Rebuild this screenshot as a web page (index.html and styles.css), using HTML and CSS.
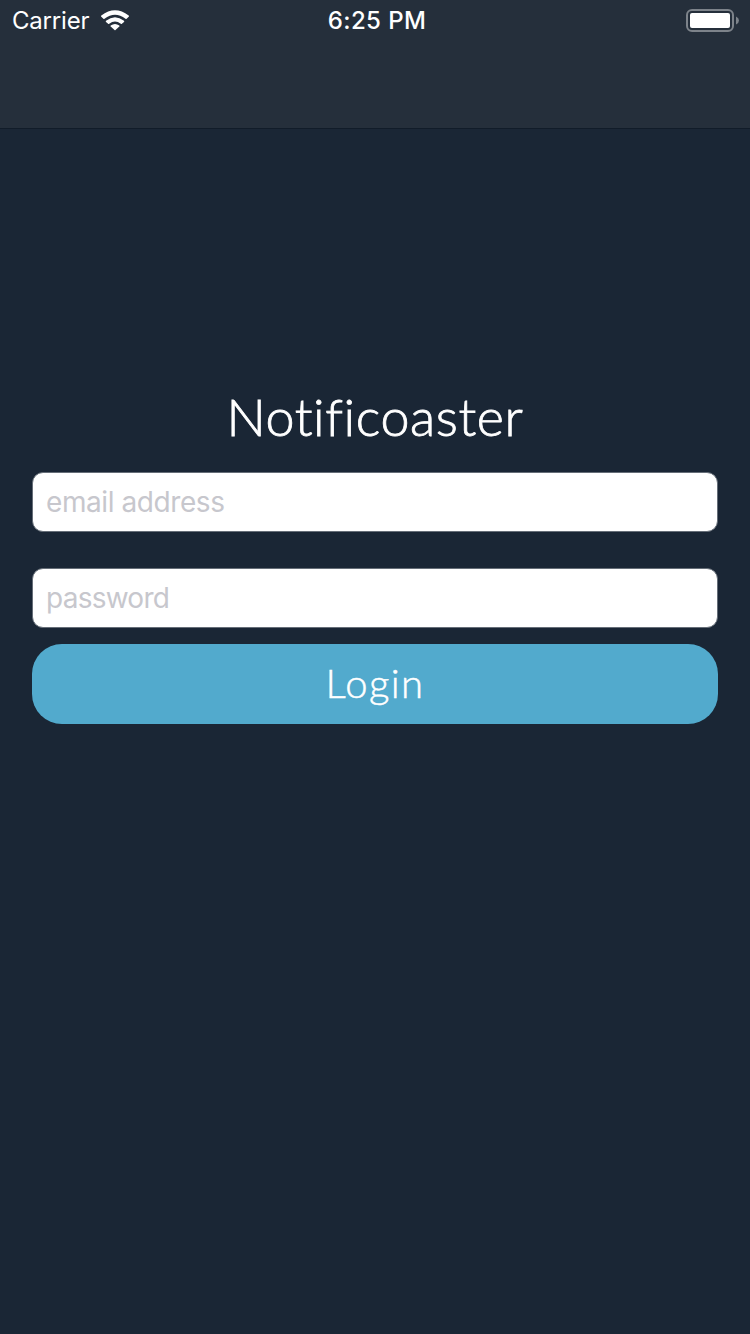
FILE: index.html
```html
<!DOCTYPE html>
<html lang="en">
<head>
<meta charset="utf-8">
<title>Notificoaster</title>
<link rel="stylesheet" href="styles.css">
</head>
<body>
<header class="nav">
  <div class="status">
    <div class="network">
      <span class="carrier">Carrier</span>
      <svg class="wifi" width="28" height="21" viewBox="0 0 28 21">
        <path d="M.3 5.6Q14-5.2 27.7 5.6Q28.3 6.1 27.7 6.7L25.6 8.8Q25.1 9.3 24.5 8.8Q14 .6 3.5 8.8Q2.9 9.3 2.4 8.8L.3 6.7Q-.3 6.1.3 5.6Z"/>
        <path d="M5 10.7Q14 3.6 23 10.7Q23.6 11.3 23 11.9L20.9 13.8Q20.4 14.3 19.8 13.8Q14 9.4 8.2 13.8Q7.6 14.3 7.1 13.8L5 11.9Q4.4 11.3 5 10.7Z"/>
        <path d="M9.7 15.6Q14 12.4 18.3 15.6Q18.8 16.1 18.3 16.6L14.5 20.1Q14 20.5 13.5 20.1L9.7 16.6Q9.2 16.1 9.7 15.6Z"/>
      </svg>
    </div>
    <span class="time">6:25 PM</span>
    <svg class="battery" width="54" height="24" viewBox="0 0 54 24">
      <rect x="1" y="1" width="46" height="21" rx="5" fill="none" stroke="#7d838a" stroke-width="2"/>
      <rect x="4" y="4" width="40" height="15" rx="2" fill="#fff"/>
      <path d="M50 7.5Q53 9 53 11.5T50 15.5Z" fill="#7d838a"/>
    </svg>
  </div>
</header>
<main class="login">
  <h1 class="title">Notificoaster</h1>
  <input class="field" type="email" placeholder="email address">
  <input class="field field-password" type="password" placeholder="password">
  <button class="submit" type="button">Login</button>
</main>
</body>
</html>
```
FILE: styles.css
```css
* { box-sizing: border-box; }

body {
  margin: 0;
  min-height: 1334px;
  background: #1a2635;
  color: #fff;
  font-family: Inter, "Liberation Sans", sans-serif;
}

.nav {
  height: 129px;
  background: #252f3b;
  border-bottom: 1px solid #111c29;
}

.status {
  display: grid;
  grid-template-columns: 1fr auto 1fr;
  align-items: center;
  height: 42px;
  padding: 0 10px 0 12px;
}

.network {
  display: flex;
  align-items: center;
  gap: 12px;
}

.carrier {
  width: 77px;
  font-size: 24px;
  line-height: 42px;
  letter-spacing: -0.2px;
}

.wifi {
  fill: #fff;
  margin-top: -2px;
}

.time {
  font-size: 24px;
  font-weight: 500;
  line-height: 42px;
  letter-spacing: 0.4px;
  padding-left: 2px;
}

.battery { justify-self: end; }

.login {
  display: flex;
  flex-direction: column;
  padding: 251px 32px 0;
}

.title {
  margin: 0 0 20px;
  font: 300 52px/72px Lato, sans-serif;
  letter-spacing: 0.6px;
  text-align: center;
  -webkit-text-stroke: 0.8px #fff;
}

.field {
  height: 60px;
  margin: 0 0 36px;
  padding: 0 13px;
  border: 1px solid #666e78;
  border-radius: 11px;
  background: #fff;
  color: #000;
  font: 28px Inter, "Liberation Sans", sans-serif;
  letter-spacing: -0.42px;
}

.field-password { letter-spacing: -0.75px; }

.field::placeholder { color: #c7c7cd; opacity: 1; }

.submit {
  height: 80px;
  margin-top: -20px;
  padding: 0 0 2px;
  border: 0;
  border-radius: 30px;
  background: #52aacd;
  color: #fff;
  font: 300 40px/78px Lato, sans-serif;
  letter-spacing: 1.4px;
  -webkit-text-stroke: 0.5px #fff;
}
```
